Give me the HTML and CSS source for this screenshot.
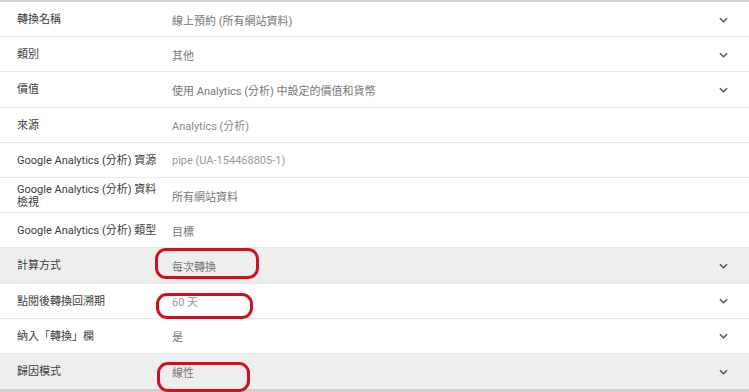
FILE: index.html
```html
<!DOCTYPE html>
<html lang="zh-Hant">
<head>
<meta charset="utf-8">
<title>轉換設定</title>
<link rel="stylesheet" href="styles.css">
</head>
<body>
<div class="panel">
  <div class="row">
    <div class="label">轉換名稱</div>
    <div class="value">線上預約 (所有網站資料)</div>
    <svg class="chev" viewBox="0 0 10 6"><path d="M1 1l4 4 4-4"/></svg>
  </div>
  <div class="row">
    <div class="label">類別</div>
    <div class="value">其他</div>
    <svg class="chev" viewBox="0 0 10 6"><path d="M1 1l4 4 4-4"/></svg>
  </div>
  <div class="row">
    <div class="label">價值</div>
    <div class="value">使用 Analytics (分析) 中設定的價值和貨幣</div>
    <svg class="chev" viewBox="0 0 10 6"><path d="M1 1l4 4 4-4"/></svg>
  </div>
  <div class="row">
    <div class="label">來源</div>
    <div class="value light">Analytics (分析)</div>
  </div>
  <div class="row">
    <div class="label">Google Analytics (分析) 資源</div>
    <div class="value lighter">pipe (UA-154468805-1)</div>
  </div>
  <div class="row">
    <div class="label">Google Analytics (分析) 資料<br>檢視</div>
    <div class="value">所有網站資料</div>
  </div>
  <div class="row">
    <div class="label">Google Analytics (分析) 類型</div>
    <div class="value">目標</div>
  </div>
  <div class="row shaded">
    <div class="label">計算方式</div>
    <div class="value">每次轉換</div>
    <svg class="chev" viewBox="0 0 10 6"><path d="M1 1l4 4 4-4"/></svg>
    <div class="mark mark-a"></div>
  </div>
  <div class="row">
    <div class="label">點閱後轉換回溯期</div>
    <div class="value lighter">60 天</div>
    <svg class="chev" viewBox="0 0 10 6"><path d="M1 1l4 4 4-4"/></svg>
    <div class="mark mark-b"></div>
  </div>
  <div class="row">
    <div class="label">納入「轉換」欄</div>
    <div class="value">是</div>
    <svg class="chev" viewBox="0 0 10 6"><path d="M1 1l4 4 4-4"/></svg>
  </div>
  <div class="row shaded">
    <div class="label">歸因模式</div>
    <div class="value">線性</div>
    <svg class="chev" viewBox="0 0 10 6"><path d="M1 1l4 4 4-4"/></svg>
    <div class="mark mark-c"></div>
  </div>
</div>
</body>
</html>
```

FILE: styles.css
```css
* { box-sizing: border-box; }
html, body {
  margin: 0;
  padding: 0;
  background: #ffffff;
}
body {
  font-family: Roboto, "Noto Sans CJK TC", sans-serif;
  font-size: 11px;
  color: #333333;
  width: 749px;
  height: 392px;
  overflow: hidden;
}
.panel {
  border-top: 2px solid #d2d2d2;
  border-bottom: 3px solid #cfcfcf;
}
.row {
  position: relative;
  display: flex;
  align-items: center;
  height: 35.2px;
  padding: 1px 21px 0 17px;
  border-bottom: 1px solid #e9e9e9;
  background: #ffffff;
}
.row:last-child { border-bottom: none; }
.row.shaded { background: #eeeeee; }
.label {
  width: 155px;
  flex: none;
  line-height: 13px;
  color: #3c3c3c;
}
.value {
  flex: 1;
  color: #777777;
}
.value.light { color: #8a8a8a; }
.value.lighter { color: #9a9a9a; }
.chev {
  width: 9px;
  height: 6px;
  flex: none;
  fill: none;
  stroke: #555555;
  stroke-width: 1.6;
}
.mark {
  position: absolute;
  border: 3px solid #d0101c;
  border-radius: 11px;
}
.mark-a { left: 155px; top: 0px; width: 104px; height: 31px; }
.mark-b { left: 156px; top: 9px; width: 97px; height: 26px; }
.mark-c { left: 157px; top: 8px; width: 93px; height: 30px; }
```
